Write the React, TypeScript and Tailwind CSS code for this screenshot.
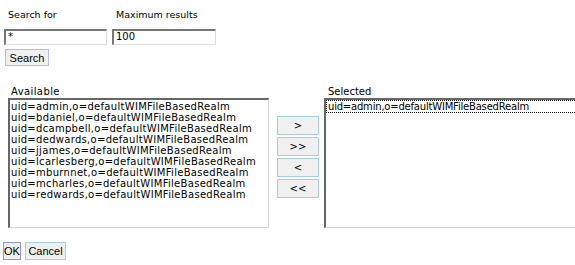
const available = [
  "uid=admin,o=defaultWIMFileBasedRealm",
  "uid=bdaniel,o=defaultWIMFileBasedRealm",
  "uid=dcampbell,o=defaultWIMFileBasedRealm",
  "uid=dedwards,o=defaultWIMFileBasedRealm",
  "uid=jjames,o=defaultWIMFileBasedRealm",
  "uid=lcarlesberg,o=defaultWIMFileBasedRealm",
  "uid=mburnnet,o=defaultWIMFileBasedRealm",
  "uid=mcharles,o=defaultWIMFileBasedRealm",
  "uid=redwards,o=defaultWIMFileBasedRealm"
];

const moves = [">", ">>", "<", "<<"];

export default function App() {
  return (
    <div className="relative h-[265px] w-[575px] overflow-hidden bg-white font-['DejaVu_Sans',sans-serif] text-[10px] text-black">
      <div className="flex pl-[8px] pt-[9px] text-[9.5px] leading-[12px]">
        <span className="w-[108px]">Search for</span>
        <span>Maximum results</span>
      </div>

      <div className="mt-[8px] flex gap-[5px] pl-[4px]">
        <div className="h-[16px] w-[103px] border border-t-2 border-l-2 border-t-[#777] border-l-[#777] border-r-[#ddd] border-b-[#ddd] pl-[2px] leading-[12px]">
          *
        </div>
        <div className="h-[16px] w-[104px] border border-t-2 border-l-2 border-t-[#777] border-l-[#777] border-r-[#ddd] border-b-[#ddd] pl-[2px] leading-[12px]">
          100
        </div>
      </div>

      <button className="ml-[5px] mt-[4px] h-[17px] w-[44px] border border-[#b4bce6] bg-[#f0f0f0] font-['Liberation_Sans',sans-serif] text-[11px] leading-[14px]">
        Search
      </button>

      <div className="mt-[20px] flex">
        <div className="ml-[8px] flex flex-col">
          <span className="pl-[3px] leading-[12px] tracking-[0.4px]">Available</span>
          <div className="h-[130px] w-[261px] border border-t-2 border-l-2 border-t-[#666] border-l-[#666] border-r-[#d8d8d8] border-b-[#d8d8d8] pl-[1px] pt-[1px] leading-[11px] tracking-[0.3px]">
            {available.map((item) => (
              <div key={item}>{item}</div>
            ))}
          </div>
        </div>

        <div className="ml-[8px] mt-[30px] flex flex-col gap-[2px]">
          {moves.map((m) => (
            <button
              key={m}
              className="h-[19px] w-[42px] border border-[#a6cde6] bg-[#f0f0f0] text-[10px] leading-[16px]"
            >
              {m}
            </button>
          ))}
        </div>

        <div className="ml-[5px] flex flex-col">
          <span className="pl-[4px] leading-[12px]">Selected</span>
          <div className="h-[130px] w-[270px] border border-t-2 border-l-2 border-t-[#666] border-l-[#666] border-r-[#d8d8d8] border-b-[#d8d8d8] leading-[11px] tracking-[-0.2px]">
            <div className="border border-dotted border-black pl-[1px]">uid=admin,o=defaultWIMFileBasedRealm</div>
          </div>
        </div>
      </div>

      <div className="mt-[14px] flex gap-[4px] pl-[3px] font-['Liberation_Sans',sans-serif] text-[11px]">
        <button className="h-[18px] w-[18px] border border-[#8a9ad6] bg-[#f0f0f0] leading-[15px]">OK</button>
        <button className="h-[18px] w-[41px] border border-[#a6cde6] bg-[#f0f0f0] leading-[15px]">Cancel</button>
      </div>
    </div>
  );
}
